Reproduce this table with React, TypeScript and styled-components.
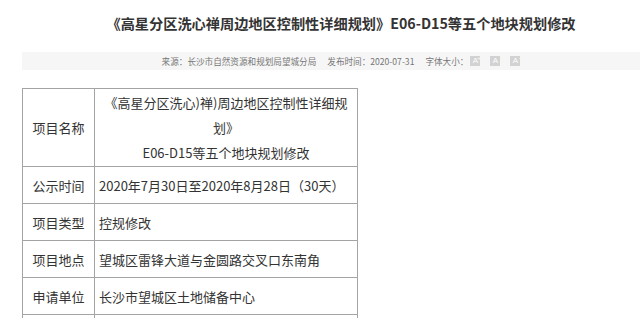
import styled, { createGlobalStyle } from "styled-components";

const GlobalStyle = createGlobalStyle`
    body {
        margin: 0;
        overflow: hidden;
        background: #fff;
        font-family: "Noto Sans CJK SC", "Noto Sans", sans-serif;
        color: #333;
    }
`

const PageStyles = styled.div`
    margin-left: 22px;
    width: 638px;
`

const TitleStyles = styled.h1`
    margin: 0;
    padding-top: 12px;
    height: 22px;
    line-height: 22px;
    font-size: 14.2px;
    font-weight: bold;
    text-align: center;
    color: #333;
    white-space: nowrap;
`

const MetaBarStyles = styled.div`
    margin-top: 18px;
    height: 18px;
    display: flex;
    align-items: center;
    justify-content: center;
    background: #f6f6f6;
    font-size: 8.6px;
    color: #777;
`

const MetaItemStyles = styled.span`
    margin-right: 11px;
`

const SizeButtonStyles = styled.span<{ gap?: number }>`
    width: 10px;
    height: 10px;
    margin-left: ${p => p.gap ?? 0}px;
    background: #d2d2d2;
    color: #fff;
    font-family: "Liberation Sans", sans-serif;
    font-size: 8px;
    line-height: 10px;
    text-align: center;
    position: relative;

    sup {
        font-size: 5px;
        position: absolute;
        top: -3px;
        right: 0;
    }
`

const TableStyles = styled.table`
    margin-top: 18px;
    width: 336px;
    border-collapse: collapse;
    font-size: 13px;
    color: #333;

    td {
        border: 1px solid #a4a4a4;
        height: 34px;
        padding: 1px 4px;
        line-height: 25px;
    }
`

const LabelCell = styled.td`
    width: 63px;
    text-align: center;
`

const ValueCell = styled.td<{ center?: boolean }>`
    text-align: ${p => p.center ? 'center' : 'left'};
`

const rows = [
    { label: '公示时间', value: '2020年7月30日至2020年8月28日（30天）' },
    { label: '项目类型', value: '控规修改' },
    { label: '项目地点', value: '望城区雷锋大道与金圆路交叉口东南角' },
    { label: '申请单位', value: '长沙市望城区土地储备中心' },
    { label: '', value: '' },
]

export default function App() {
    return (
        <>
            <GlobalStyle />
            <PageStyles>
                <TitleStyles>《高星分区洗心禅周边地区控制性详细规划》E06-D15等五个地块规划修改</TitleStyles>
                <MetaBarStyles>
                    <MetaItemStyles>来源：长沙市自然资源和规划局望城分局</MetaItemStyles>
                    <MetaItemStyles>发布时间：2020-07-31</MetaItemStyles>
                    <span>字体大小：</span>
                    <SizeButtonStyles gap={2}>A<sup>+</sup></SizeButtonStyles>
                    <SizeButtonStyles gap={10}>A</SizeButtonStyles>
                    <SizeButtonStyles gap={10}>A<sup>-</sup></SizeButtonStyles>
                </MetaBarStyles>
                <TableStyles>
                    <tbody>
                        <tr>
                            <LabelCell>项目名称</LabelCell>
                            <ValueCell center>
                                《高星分区洗心)禅)周边地区控制性详细规划》<br />
                                E06-D15等五个地块规划修改
                            </ValueCell>
                        </tr>
                        {rows.map((r, i) => (
                            <tr key={i}>
                                <LabelCell>{r.label}</LabelCell>
                                <ValueCell>{r.value}</ValueCell>
                            </tr>
                        ))}
                    </tbody>
                </TableStyles>
            </PageStyles>
        </>
    )
}
